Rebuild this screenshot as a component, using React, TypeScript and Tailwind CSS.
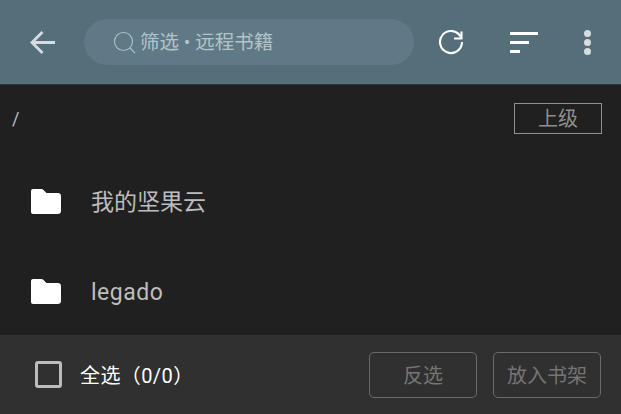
const cjk = "font-['Roboto','Noto_Sans_CJK_SC',sans-serif]";

function FolderIcon() {
  return (
    <svg className="mb-[3px]" width="32" height="26" viewBox="0 0 32 26" fill="#ffffff">
      <path d="M3 1h8.500c.8 0 1.400.3 2 .9L16.500 5H28c1.700 0 3 1.300 3 3v15c0 1.700-1.300 3-3 3H3c-1.100 0-2-.9-2-2V3c0-1.100.9-2 2-2z" />
    </svg>
  );
}

function FolderRow({ name, latin }: { name: string; latin?: boolean }) {
  return (
    <div className="h-[90px] shrink-0 flex items-center pl-[30px]">
      <FolderIcon />
      <span className={`ml-[29px] text-[23px] text-[#bdbdbd] leading-none ${latin ? "tracking-[0.5px] pt-[1px]" : ""}`}>{name}</span>
    </div>
  );
}

export default function App() {
  return (
    <div className={`w-[621px] h-[414px] flex flex-col overflow-hidden bg-[#202020] ${cjk}`}>
      <header className="h-[85px] shrink-0 bg-[#546e7a] flex items-center border-b border-[#2a3a40]">
        <button className="w-[84px] h-[46px] pl-[30px] pt-[1px] flex items-center">
          <svg width="25" height="25" viewBox="0 0 25 25" fill="none" stroke="#d5dde1" strokeWidth="2.800">
            <path d="M25 12.500H3M12.500 2 2 12.500 12.500 23" />
          </svg>
        </button>
        <div className="w-[330px] h-[46px] rounded-full bg-[#5f7a86] flex items-center pl-[29px]">
          <svg width="23" height="23" viewBox="0 0 23 23" fill="none" stroke="#b0c0c7" strokeWidth="1.100">
            <circle cx="10.500" cy="10.500" r="9" />
            <path d="m17 17 5 5" />
          </svg>
          <span className="ml-[4px] pt-[2px] text-[19.500px] text-[#b4c3c9] leading-none">筛选 • 远程书籍</span>
        </div>
        <button className="ml-[24px] w-[26px] h-[26px] flex items-center justify-center">
          <svg width="26" height="26" viewBox="0 0 26 26" fill="none" stroke="#ffffff" strokeWidth="2.100">
            <path d="M22.800 8A11 11 0 1 0 24 13" />
            <path d="M23.500 2.500V9.500H16" />
          </svg>
        </button>
        <div className="ml-[46px] w-[28px] flex flex-col gap-[6px]">
          <span className="block h-[3px] w-[28px] bg-white" />
          <span className="block h-[3px] w-[19px] bg-white" />
          <span className="block h-[3px] w-[10px] bg-white" />
        </div>
        <div className="ml-[46px] flex flex-col gap-[2px]">
          <span className="block w-[7px] h-[7px] rounded-full bg-[#d5dde1]" />
          <span className="block w-[7px] h-[7px] rounded-full bg-[#d5dde1]" />
          <span className="block w-[7px] h-[7px] rounded-full bg-[#d5dde1]" />
        </div>
      </header>

      <main className="flex-1 min-h-0 overflow-hidden flex flex-col">
        <div className="h-[72px] shrink-0 flex items-start justify-between pl-[12px] pr-[19px] pt-[18px]">
          <span className="text-[18px] text-[#bdbdbd] leading-[32px]">/</span>
          <button className="w-[88px] h-[31px] border border-[#8f8f8f] text-[20px] text-[#8f8f8f] leading-none flex items-center justify-center">
            上级
          </button>
        </div>
        <FolderRow name="我的坚果云" />
        <FolderRow name="legado" latin />
      </main>

      <footer className="h-[79px] shrink-0 bg-[#303030] flex items-center pl-[35px] pr-[20px]">
        <span className="w-[27px] h-[27px] rounded-[3px] border-[3px] border-[#bcbcbc]" />
        <span className="ml-[18px] pt-[2px] text-[20px] text-white leading-none tracking-[0.4px]">全选（0/0）</span>
        <button className="ml-auto w-[108px] h-[46px] pt-[2px] rounded-[5px] border border-[#6a6a6a] text-[20px] text-[#757575] leading-none">
          反选
        </button>
        <button className="ml-[16px] w-[108px] h-[46px] pt-[2px] rounded-[5px] border border-[#6a6a6a] text-[20px] text-[#757575] leading-none">
          放入书架
        </button>
      </footer>
    </div>
  );
}
